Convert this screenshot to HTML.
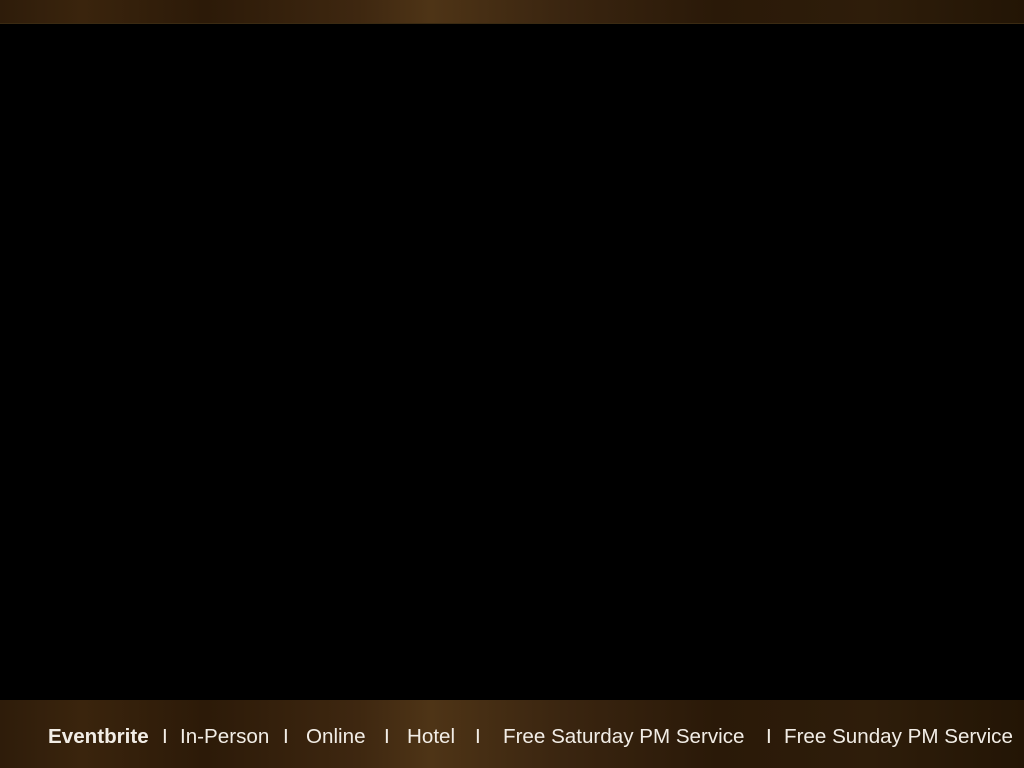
<!DOCTYPE html>
<html><head><style>
body{margin:0;width:1024px;height:768px;background:#000;overflow:hidden;position:relative;font-family:"Liberation Sans",sans-serif}
.bar{position:absolute;left:0;width:1024px;background:linear-gradient(90deg,#2e1c0a 0%,#3a240d 8%,#2c1a08 20%,#3e2710 35%,#4e3416 42%,#3a2510 55%,#2a1908 70%,#2e1d0a 85%,#231505 100%)}
.top{top:0;height:23px;border-bottom:1px solid #3a2a12}
.bot{top:700px;height:68px}
.t{position:absolute;top:725px;color:#f2ede6;font-size:20.6px;white-space:nowrap}
</style></head><body>
<div class="bar top"></div>
<div class="bar bot"></div>
<span class="t" style="left:48px;font-weight:bold">Eventbrite</span>
<span class="t" style="left:162px">I</span>
<span class="t" style="left:180px">In-Person</span>
<span class="t" style="left:283px">I</span>
<span class="t" style="left:306px">Online</span>
<span class="t" style="left:384px">I</span>
<span class="t" style="left:407px">Hotel</span>
<span class="t" style="left:475px">I</span>
<span class="t" style="left:503px">Free Saturday PM Service</span>
<span class="t" style="left:766px">I</span>
<span class="t" style="left:784px">Free Sunday PM Service</span>
</body></html>
